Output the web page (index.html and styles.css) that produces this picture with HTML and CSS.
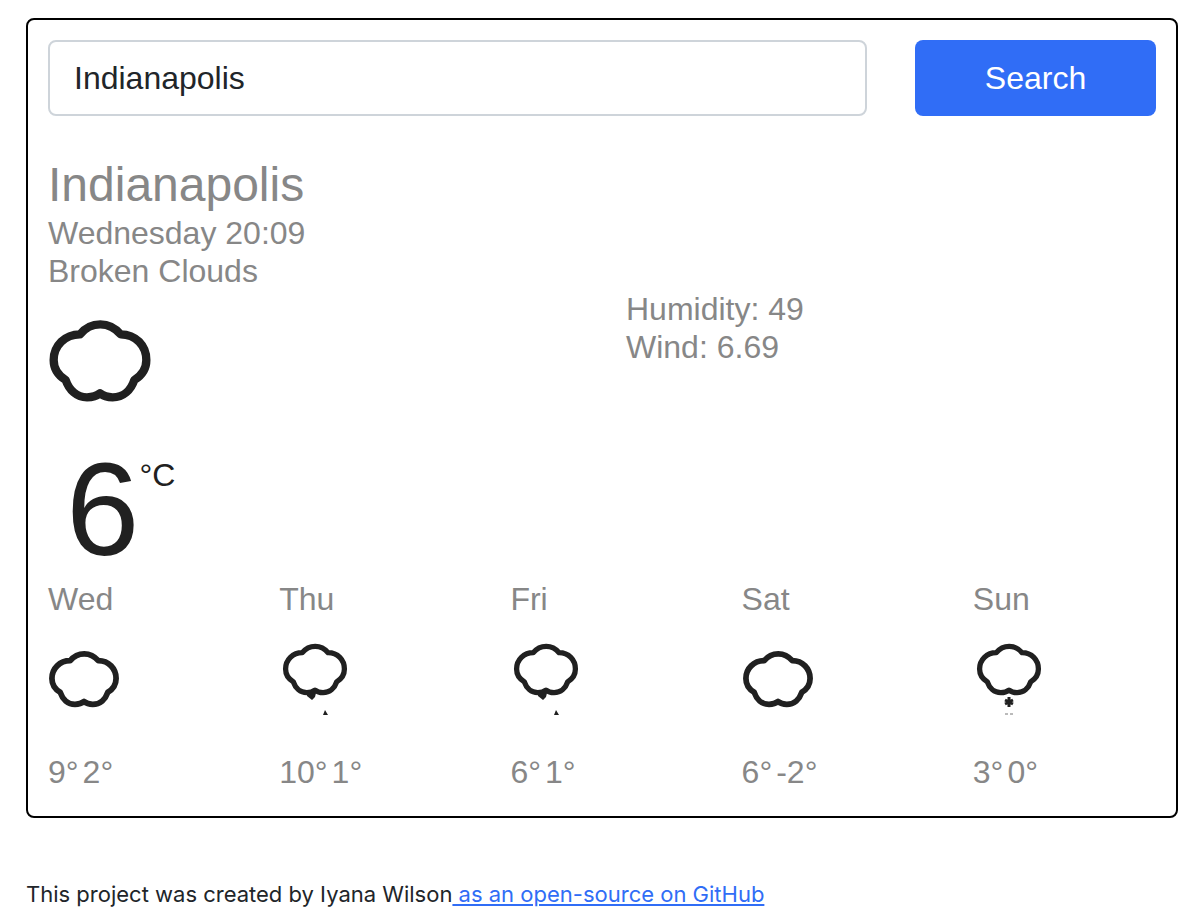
FILE: index.html
```html
<!DOCTYPE html>
<html lang="en">
<head>
<meta charset="utf-8">
<meta name="viewport" content="width=device-width, initial-scale=1">
<title>Weather</title>
<link rel="stylesheet" href="styles.css">
</head>
<body>
<svg class="sprite" aria-hidden="true">
  <symbol id="cloud" viewBox="84 54 312 252">
    <path d="M180 103C196 83 217 73 241 73C265 73 285 83 302 103C347 103 379 137 379 180C379 203 368 225 343 240C333 270 310 292 278 292C264 292 251 289 240 280C229 289 215 292 201 292C170 292 147 270 137 240C112 225 101 203 101 180C101 137 135 103 180 103Z" fill="none" stroke="#202020" stroke-width="25" stroke-linejoin="round"/>
  </symbol>
  <symbol id="clouds" viewBox="0 0 72 72">
    <use href="#cloud" x="0" y="6" width="72" height="59"/>
  </symbol>
  <symbol id="rain" viewBox="0 0 72 72">
    <use href="#cloud" x="3" y="-1" width="66" height="54"/>
    <path d="M28 50h9l-1 4-3 3-5-4zM46 67l3 5h-5z" fill="#202020"/>
  </symbol>
  <symbol id="snow" viewBox="0 0 72 72">
    <use href="#cloud" x="3" y="-1" width="66" height="54"/>
    <path d="M36 54v10M32 57l8 4M32 61l8-4" stroke="#202020" stroke-width="3"/>
    <path d="M32 71h3M37 71h3" stroke="#777" stroke-width="1"/>
  </symbol>
</svg>
<main class="card">
  <form class="search">
    <input class="search-input" type="search" aria-label="City" value="Indianapolis">
    <button class="search-button" type="button">Search</button>
  </form>
  <section class="summary">
    <h1 class="city">Indianapolis</h1>
    <p class="line">Wednesday 20:09</p>
    <p class="line">Broken Clouds</p>
  </section>
  <section class="current">
    <div class="now">
      <svg class="now-icon" role="img" aria-label="Broken clouds"><use href="#cloud"/></svg>
      <div class="temperature"><span class="degrees">6</span><span class="unit">°C</span></div>
    </div>
    <div class="details">
      <p class="line">Humidity: 49</p>
      <p class="line">Wind: 6.69</p>
    </div>
  </section>
  <section class="forecast">
    <div class="day"><p class="line">Wed</p><svg class="day-icon" role="img" aria-label="Clouds"><use href="#clouds"/></svg><p class="line range"><span>9°</span><span>2°</span></p></div>
    <div class="day"><p class="line">Thu</p><svg class="day-icon" role="img" aria-label="Rain"><use href="#rain"/></svg><p class="line range"><span>10°</span><span>1°</span></p></div>
    <div class="day"><p class="line">Fri</p><svg class="day-icon" role="img" aria-label="Rain"><use href="#rain"/></svg><p class="line range"><span>6°</span><span>1°</span></p></div>
    <div class="day"><p class="line">Sat</p><svg class="day-icon" role="img" aria-label="Clouds"><use href="#clouds"/></svg><p class="line range"><span>6°</span><span>-2°</span></p></div>
    <div class="day"><p class="line">Sun</p><svg class="day-icon" role="img" aria-label="Snow"><use href="#snow"/></svg><p class="line range"><span>3°</span><span>0°</span></p></div>
  </section>
</main>
<footer class="footer">This project was created by Iyana Wilson<a class="link" href="#"> as an open-source on GitHub</a></footer>
</body>
</html>
```
FILE: styles.css
```css
* {
  box-sizing: border-box;
}
body {
  margin: 0;
  padding: 18px 20px 0 26px;
  background: #fff;
  color: #212529;
  font-family: "Liberation Sans", Arial, sans-serif;
  font-size: 32px;
}
.sprite {
  position: absolute;
  width: 0;
  height: 0;
}
.card {
  padding: 20px 20px 25px;
  border: 2px solid #000;
  border-radius: 8px;
  color: #878787;
}
.search {
  display: grid;
  grid-template-columns: repeat(12, minmax(0, 1fr));
  column-gap: 48px;
  margin-bottom: 40px;
}
.search-input,
.search-button {
  height: 76px;
  border-radius: 8px;
  font: inherit;
  appearance: none;
}
.search-input {
  grid-column: span 9;
  min-width: 0;
  padding: 0 24px;
  border: 2px solid #ced4da;
  background: #fff;
  color: #212529;
}
.search-button {
  grid-column: span 3;
  padding: 0;
  border: 0;
  background: #306df6;
  color: #fff;
}
.city {
  margin: 0;
  font-size: 48px;
  font-weight: 400;
  line-height: 58px;
}
.line {
  margin: 0;
  line-height: 38px;
}
.current {
  display: grid;
  grid-template-columns: 1fr 1fr;
  column-gap: 48px;
}
.now {
  padding-top: 28px;
}
.now-icon {
  display: block;
  width: 104px;
  height: 84px;
}
.temperature {
  display: flex;
  align-items: flex-start;
  padding: 44px 0 6px 18px;
  color: #212121;
}
.degrees {
  font-size: 132px;
  line-height: 128px;
}
.unit {
  padding-top: 10px;
  line-height: 38px;
}
.forecast {
  display: grid;
  grid-template-columns: repeat(5, minmax(0, 1fr));
  column-gap: 48px;
}
.day-icon {
  display: block;
  width: 72px;
  height: 72px;
  margin: 25px 0 38px;
}
.range {
  display: flex;
  gap: 4px;
}
.footer {
  padding: 58px 0 12px;
  font-family: Inter, sans-serif;
  font-size: 22px;
  line-height: 36px;
}
.link {
  color: #306df6;
}
```
